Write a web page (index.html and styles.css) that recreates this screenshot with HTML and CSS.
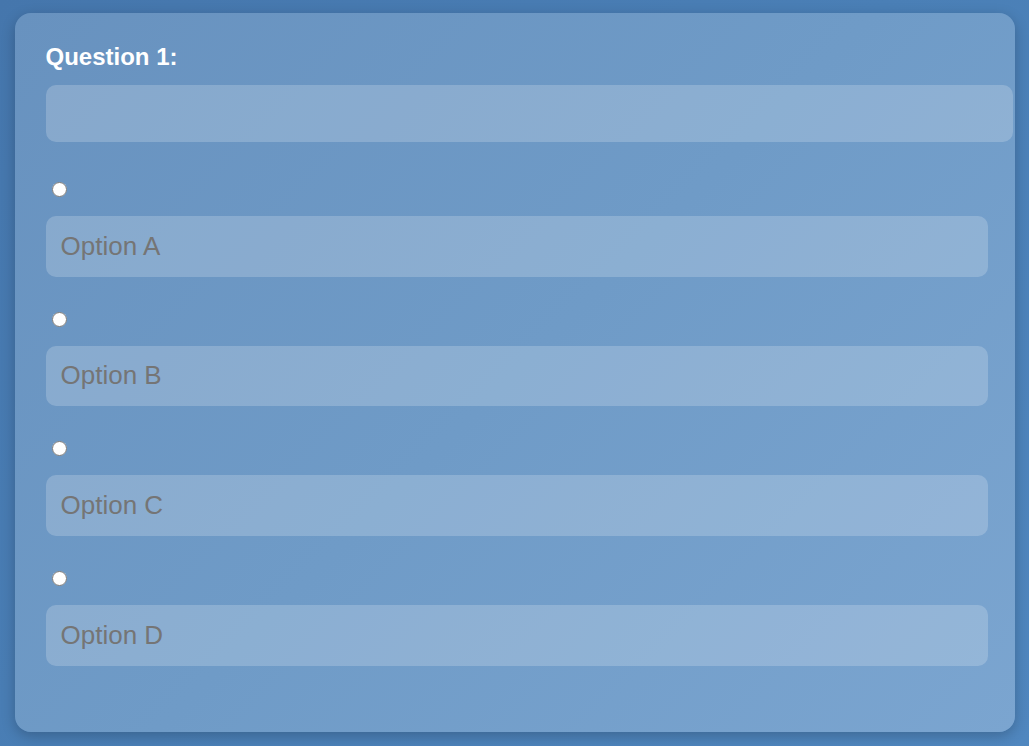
FILE: index.html
```html
<!DOCTYPE html>
<html lang="en">
<head>
<meta charset="utf-8">
<title>Question</title>
<link rel="stylesheet" href="styles.css">
</head>
<body>
  <div class="card">
    <label class="q-label" for="q1">Question 1:</label>
    <input class="q-input" id="q1" type="text">
    <div class="option">
      <input class="radio" type="radio" name="ans">
      <input class="opt-input" type="text" placeholder="Option A">
    </div>
    <div class="option">
      <input class="radio" type="radio" name="ans">
      <input class="opt-input" type="text" placeholder="Option B">
    </div>
    <div class="option">
      <input class="radio" type="radio" name="ans">
      <input class="opt-input" type="text" placeholder="Option C">
    </div>
    <div class="option">
      <input class="radio" type="radio" name="ans">
      <input class="opt-input" type="text" placeholder="Option D">
    </div>
  </div>
</body>
</html>
```
FILE: styles.css
```css
html, body {
  margin: 0;
  height: 100%;
}
body {
  background: linear-gradient(135deg, #4576ac 0%, #4a7fb6 50%, #5087bf 100%);
  font-family: "Liberation Sans", Arial, sans-serif;
  padding-top: 13px;
  box-sizing: border-box;
  overflow: hidden;
}
.card {
  width: 1000px;
  margin: 0 auto;
  box-sizing: border-box;
  padding: 31px;
  border-radius: 16px;
  background: linear-gradient(135deg, #6892bf 0%, #6f9bc7 50%, #7ba5d0 100%);
  box-shadow: 0 4px 14px rgba(0, 0, 0, 0.22);
}
.q-label {
  display: block;
  color: #ffffff;
  font-weight: bold;
  font-size: 24px;
  line-height: 26px;
  margin-bottom: 15px;
}
.q-input,
.opt-input {
  display: block;
  box-sizing: border-box;
  border: none;
  outline: none;
  border-radius: 10px;
  background: rgba(255, 255, 255, 0.2);
  padding: 0 15px;
  font-family: "Liberation Sans", Arial, sans-serif;
  font-size: 26px;
  color: #333;
}
.q-input {
  width: 967px;
  height: 57px;
  margin-bottom: 40px;
}
.opt-input {
  width: 942px;
  height: 60.67px;
}
.opt-input::placeholder {
  color: #757575;
}
.option {
  margin-bottom: 35px;
}
.radio {
  display: block;
  width: 15px;
  height: 15px;
  margin: 0 0 19px 6px;
}
```
